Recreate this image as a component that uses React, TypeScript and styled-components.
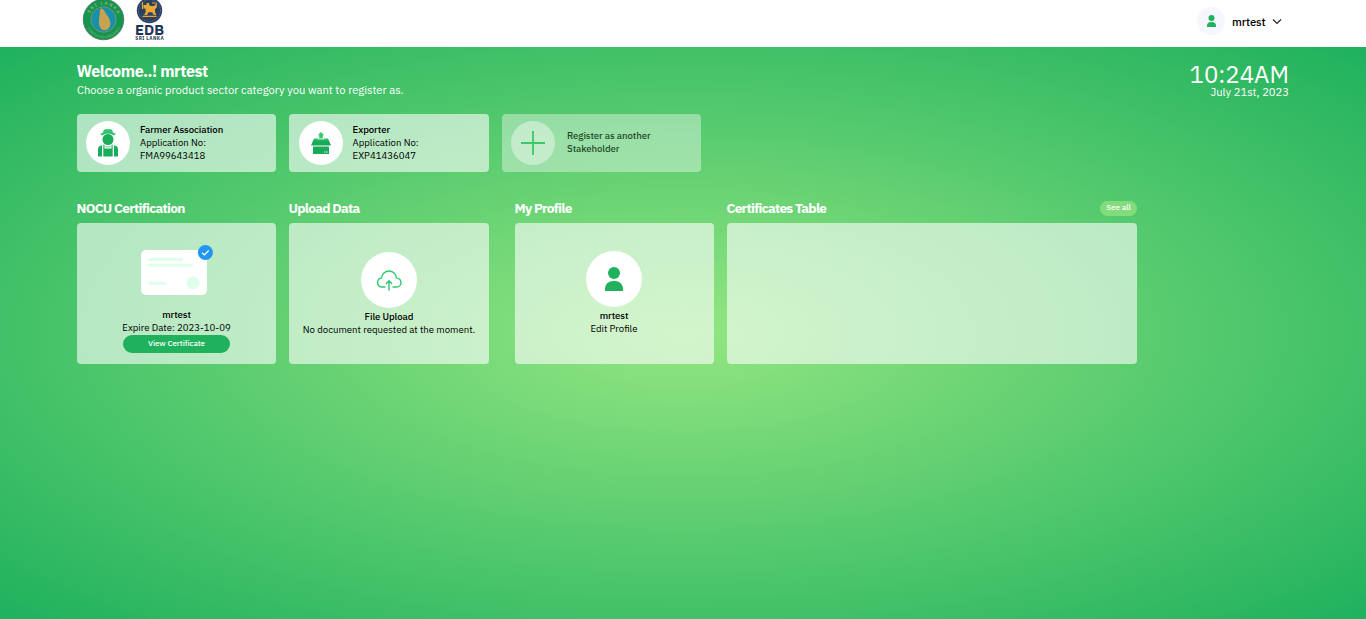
import React from "react";
import styled, { createGlobalStyle } from "styled-components";

const GREEN = "#20b15d";
const FONT = '"IBM Plex Sans", Roboto, "Liberation Sans", sans-serif';

const GlobalStyle = createGlobalStyle`
  * { box-sizing: border-box; }
  html, body { margin: 0; padding: 0; }
  body { font-family: ${FONT}; color: #000; background: #fff; overflow: hidden; }
  h1, h2, p { margin: 0; }
  svg { display: block; }
`;

const Page = styled.div`
  height: 619px;
  display: flex;
  flex-direction: column;
`;

const Header = styled.header`
  height: 47px;
  flex: none;
  display: flex;
  justify-content: space-between;
  padding: 0 84px 0 82px;
  background: #fff;
`;

const Logos = styled.div`
  display: flex;
  gap: 10px;
  height: 41px;
  overflow: hidden;
`;

const UserMenu = styled.div`
  display: flex;
  align-items: center;
  height: 43px;
`;

const Avatar = styled.div`
  width: 28px;
  height: 28px;
  border-radius: 50%;
  background: #f6f6ff;
  display: grid;
  place-items: center;
  margin: -1px 7px 0 0;
`;

const UserName = styled.span`
  width: 34px;
  margin-right: 6px;
  font-size: 11.2px;
  line-height: 16px;
  font-weight: 500;
  letter-spacing: -0.1px;
  padding-top: 1px;
`;

const Main = styled.main`
  flex: 1;
  padding: 14px 77px 0;
  background: radial-gradient(ellipse at center, #93e681 0%, #1fb15d 100%);
`;

const Intro = styled.div`
  display: flex;
  justify-content: space-between;
  height: 53px;
  color: #fff;
`;

const Welcome = styled.h1`
  font-size: 16px;
  line-height: 20px;
  font-weight: 700;
  letter-spacing: -0.4px;
  margin: 0 0 2px -0.5px;
`;

const Subtitle = styled.p`
  font-size: 11.2px;
  line-height: 14px;
`;

const Clock = styled.div`
  display: flex;
  flex-direction: column;
  align-items: flex-end;
`;

const Time = styled.div`
  font-size: 24px;
  line-height: 26px;
`;

const Day = styled.div`
  font-size: 11.2px;
  line-height: 12px;
  margin-top: -1px;
`;

const Registrations = styled.div`
  display: grid;
  grid-template-columns: 199px 200px 199px;
  column-gap: 13px;
`;

const Registration = styled.div<{ $faded?: boolean; $inset: number }>`
  height: 58px;
  border-radius: 4px;
  display: flex;
  align-items: center;
  padding-left: ${(p) => p.$inset}px;
  gap: ${(p) => (p.$faded ? 12 : 10)}px;
  background: rgba(255, 255, 255, 0.6);
  opacity: ${(p) => (p.$faded ? 0.65 : 1)};
`;

const RegistrationText = styled.div`
  padding-bottom: 2px;
`;

const Disc = styled.div<{ $size: number; $soft?: boolean }>`
  width: ${(p) => p.$size}px;
  height: ${(p) => p.$size}px;
  flex: none;
  border-radius: 50%;
  background: ${(p) => (p.$soft ? "rgba(255,255,255,0.95)" : "#fff")};
  display: grid;
  place-items: center;
`;

const Line = styled.p<{ $strong?: boolean }>`
  font-size: 9.6px;
  line-height: 13px;
  font-weight: ${(p) => (p.$strong ? 500 : 400)};
  letter-spacing: ${(p) => (p.$strong ? -0.08 : 0)}px;
  white-space: nowrap;
`;

const Sections = styled.div`
  display: grid;
  grid-template-columns: 199px 200px 199px 410px;
  column-gap: 13px;
  margin-top: 27px;
`;

const Section = styled.section<{ $indent?: boolean }>`
  margin-left: ${(p) => (p.$indent ? 13 : 0)}px;
  margin-right: ${(p) => (p.$indent ? -13 : 0)}px;
`;

const SectionHead = styled.div`
  display: flex;
  align-items: flex-start;
  justify-content: space-between;
  height: 18px;
  margin-bottom: 6px;
`;

const SectionTitle = styled.h2`
  margin-left: -0.5px;
  font-size: 13.6px;
  line-height: 18px;
  font-weight: 700;
  letter-spacing: -0.7px;
  color: #fff;
`;

const SeeAll = styled.button`
  width: 37px;
  height: 15px;
  margin-top: 2px;
  padding: 0 0 2px;
  border: 0;
  border-radius: 8px;
  background: #83dc7b;
  color: #fff;
  font: 500 8px/13px ${FONT};
`;

const Card = styled.div<{ $top: number }>`
  height: 141px;
  border-radius: 4px;
  background: rgba(255, 255, 255, 0.6);
  display: flex;
  flex-direction: column;
  align-items: center;
  padding-top: ${(p) => p.$top}px;
`;

const ProfileCard = styled(Card)`
  padding-right: 1px;
`;

const CardText = styled.div<{ $gap: number }>`
  margin-top: ${(p) => p.$gap}px;
  text-align: center;
`;

const ViewButton = styled.button`
  width: 107px;
  height: 18px;
  margin-top: 1px;
  padding: 0 0 2px;
  border: 0;
  border-radius: 9px;
  background: ${GREEN};
  color: #fff;
  font: 500 8px/16px ${FONT};
  letter-spacing: -0.08px;
`;

const NocuLogo = () => (
  <svg width="43" height="41" viewBox="0 0 43 41">
    <defs>
      <path id="arcTop" d="M6.8 19.5a14.8 14.8 0 0 1 29.6 0" />
      <path id="arcBottom" d="M3.2 20a18.2 18.2 0 0 0 36.6 0" />
    </defs>
    <circle cx="21.5" cy="19.5" r="20.3" fill="#159451" stroke="#58705b" strokeWidth="0.8" />
    <circle cx="21.5" cy="19.5" r="12.7" fill="#178fae" stroke="#8b9b50" strokeWidth="0.8" />
    <path d="M19.2 8.6c1.7 0 2.9 1.7 3.9 3.6 2.200 3.300 5.100 6.500 5.200 10.700.1 4.300-2.400 7.400-5.900 7.200-3.500-.2-5.500-3.500-5.500-8.200 0-3.100.6-5.400.8-8.100.1-2.100.1-4.700 1.500-5.200z" fill="#c8a24c" />
    <text fontSize="4.6" fontWeight="600" fill="#8fb873" letterSpacing="1.3">
      <textPath href="#arcTop" startOffset="6">SRI LANKA</textPath>
    </text>
    <text fontSize="3.6" fontWeight="600" fill="#6bab69" letterSpacing="0.3">
      <textPath href="#arcBottom" startOffset="8.5">CERTIFIED ORGANIC</textPath>
    </text>
  </svg>
);

const EdbLogo = () => (
  <svg width="30" height="41" viewBox="0 0 30 41">
    <circle cx="14.5" cy="10.5" r="12.7" fill="#2b4163" />
    <circle cx="14.5" cy="10.5" r="11" fill="none" stroke="#75859b" strokeWidth="0.8" strokeDasharray="1.2 1.5" />
    <path d="M8.5 5h3V3H14v1.500L15.500 6H19l1.500-1.500V2.500h1.300v5L20 9v3l1.500 3h-2.700L17 12.300h-3.500L12 15H9l1.700-3L10.500 8.500h-2z" fill="#e9a930" />
    <path d="M7.500 2v7M17 3h3M7.500 16.300h14" stroke="#e9a930" strokeWidth="1.2" fill="none" />
    <text x="0" y="34.800" fontSize="14.5" fontWeight="700" fill="#1f3557" textLength="29" lengthAdjust="spacingAndGlyphs">EDB</text>
    <text x="0.3" y="39.500" fontSize="4.700" fontWeight="700" fill="#1f3557" textLength="28.5">SRI LANKA</text>
  </svg>
);

const PersonIcon = ({ width, height }: { width: number; height: number }) => (
  <svg width={width} height={height} viewBox="0 0 18 24" fill={GREEN}>
    <circle cx="9" cy="6" r="6" />
    <path d="M0 24v-2a8 8 0 0 1 8-8h2a8 8 0 0 1 8 8v2z" />
  </svg>
);

const FarmerIcon = () => (
  <svg width="20" height="28" viewBox="0 0 20 28" fill="#19ad5a">
    <path d="M2 5 5 3.500C5.300 1.800 6 .3 7.500.3h5c1.500 0 2.200 1.500 2.500 3.200L18 5l-2.300 1.500C13 4 7 4 4.300 6.500z" fill="#31c56d" />
    <circle cx="10" cy="10.500" r="5.500" />
    <path d="M0 27.500V20.500c0-2.300 1.500-3.900 4-4.200V27.500zM20 27.500V20.500c0-2.300-1.500-3.900-4-4.200V27.500z" />
    <path d="M5.300 15.800h1.200v3.700h7v-3.700h1.200v11.700H5.300z" />
    <path d="M7.600 17q2.400 1.200 4.800 0v1.300H7.600z" fill="#31c56d" />
  </svg>
);

const ExportIcon = () => (
  <svg width="20" height="23" viewBox="0 0 20 23">
    <path d="M10 0 13.200 3.300H11.800V6.500H8.200V3.300H6.800z" fill="#36ca70" />
    <path d="M2.500 7.500h15L20 13.500H0z" fill="#19aa59" />
    <path d="M3.200 6.500H7v1.200h6V6.500h3.800l.7 2h-15z" fill="#2cc268" />
    <path d="M2 14.500h16V22H2z" fill="#19aa59" />
    <path d="M13 20h1.300M15 20h1.500" stroke="#fff" strokeWidth="0.9" />
  </svg>
);

const PlusIcon = () => (
  <svg width="24" height="24" viewBox="0 0 24 24" stroke="#2dc767" strokeWidth="1.8">
    <path d="M12 0v24M0 12h24" />
  </svg>
);

const CertificateIcon = () => (
  <svg width="73" height="50" viewBox="0 0 73 50">
    <rect x="1" y="5" width="66" height="45" rx="5" fill="#fff" />
    <g fill="#e0ffeb">
      <rect x="8" y="13" width="35" height="3" rx="1.5" />
      <rect x="8" y="18.700" width="45" height="3" rx="1.5" />
      <rect x="8" y="36.700" width="18.5" height="3" rx="1.5" />
      <circle cx="53" cy="38" r="6.5" />
    </g>
    <circle cx="65.4" cy="7.5" r="7.5" fill="#2196f3" />
    <path d="m62.100 7.700 2.300 2.200 4.300-4.400" fill="none" stroke="#fff" strokeWidth="1.3" />
  </svg>
);

const CloudIcon = () => (
  <svg width="26" height="21" viewBox="0 0 26 21" fill="none" stroke="#2dcb70" strokeWidth="1.4" strokeLinecap="round" strokeLinejoin="round">
    <path d="M9 17H5.500A4.600 4.600 0 0 1 5.600 7.900C6 4 9 1 13 1s7 3 7.400 6.900C23 8.400 25 10.200 25 12.700c0 2.500-2 4.300-4.500 4.300H17" />
    <path d="M13 20V11M10.300 13.500 13 10.800l2.700 2.700" />
  </svg>
);

export default function App() {
  return (
    <Page>
      <GlobalStyle />
      <Header>
        <Logos>
          <NocuLogo />
          <EdbLogo />
        </Logos>
        <UserMenu>
          <Avatar>
            <PersonIcon width={9} height={12} />
          </Avatar>
          <UserName>mrtest</UserName>
          <svg width="10" height="7" viewBox="0 0 10 7" fill="none" stroke="#222" strokeWidth="1.1">
            <path d="m1 1.500 4 4 4-4" />
          </svg>
        </UserMenu>
      </Header>
      <Main>
        <Intro>
          <div>
            <Welcome>Welcome..! mrtest</Welcome>
            <Subtitle>Choose a organic product sector category you want to register as.</Subtitle>
          </div>
          <Clock>
            <Time>10:24AM</Time>
            <Day>July 21st, 2023</Day>
          </Clock>
        </Intro>
        <Registrations>
          <Registration $inset={9}>
            <Disc $size={44}><FarmerIcon /></Disc>
            <RegistrationText>
              <Line $strong>Farmer Association</Line>
              <Line>Application No:</Line>
              <Line>FMA99643418</Line>
            </RegistrationText>
          </Registration>
          <Registration $inset={9.6}>
            <Disc $size={44}><ExportIcon /></Disc>
            <RegistrationText>
              <Line $strong>Exporter</Line>
              <Line>Application No:</Line>
              <Line>EXP41436047</Line>
            </RegistrationText>
          </Registration>
          <Registration $faded $inset={9}>
            <Disc $size={44} $soft><PlusIcon /></Disc>
            <RegistrationText>
              <Line $strong>Register as another</Line>
              <Line $strong>Stakeholder</Line>
            </RegistrationText>
          </Registration>
        </Registrations>
        <Sections>
          <Section>
            <SectionHead><SectionTitle>NOCU Certification</SectionTitle></SectionHead>
            <Card $top={22}>
              <CertificateIcon />
              <CardText $gap={13}>
                <Line $strong>mrtest</Line>
                <Line>Expire Date: 2023-10-09</Line>
              </CardText>
              <ViewButton>View Certificate</ViewButton>
            </Card>
          </Section>
          <Section>
            <SectionHead><SectionTitle>Upload Data</SectionTitle></SectionHead>
            <Card $top={29}>
              <Disc $size={56}><CloudIcon /></Disc>
              <CardText $gap={2}>
                <Line $strong>File Upload</Line>
                <Line>No document requested at the moment.</Line>
              </CardText>
            </Card>
          </Section>
          <Section $indent>
            <SectionHead><SectionTitle>My Profile</SectionTitle></SectionHead>
            <ProfileCard $top={28}>
              <Disc $size={56}><PersonIcon width={18} height={24} /></Disc>
              <CardText $gap={2}>
                <Line $strong>mrtest</Line>
                <Line>Edit Profile</Line>
              </CardText>
            </ProfileCard>
          </Section>
          <Section $indent>
            <SectionHead>
              <SectionTitle>Certificates Table</SectionTitle>
              <SeeAll>See all</SeeAll>
            </SectionHead>
            <Card $top={0} />
          </Section>
        </Sections>
      </Main>
    </Page>
  );
}
